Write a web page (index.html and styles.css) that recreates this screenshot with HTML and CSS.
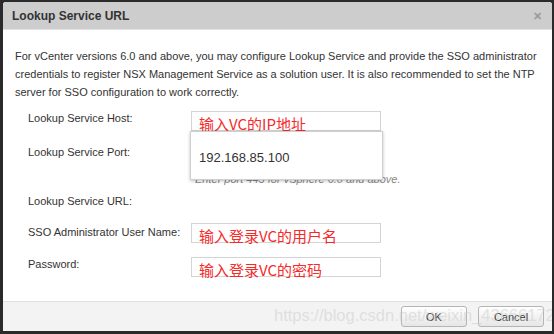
FILE: index.html
```html
<!DOCTYPE html>
<html lang="en">
<head>
    <meta charset="UTF-8">
    <title>Lookup Service URL</title>
    <link rel="stylesheet" href="styles.css">
</head>
<body>
    <div class="dialog">
        <div class="dialog-header">
            <span class="dialog-title">Lookup Service URL</span>
            <span class="close">&#x2715;</span>
        </div>
        <div class="dialog-body">
            <p class="intro">For vCenter versions 6.0 and above, you may configure Lookup Service and provide the SSO administrator credentials to register NSX Management Service as a solution user. It is also recommended to set the NTP server for SSO configuration to work correctly.</p>

            <div class="form">
                <div class="row row-host">
                    <label>Lookup Service Host:</label>
                    <div class="field"><div class="input cn">输入VC的IP地址</div></div>
                </div>
                <div class="row row-port">
                    <label>Lookup Service Port:</label>
                    <div class="field">
                        <div class="input"></div>
                        <div class="hint">Enter port 443 for vSphere 6.0 and above.</div>
                        <!-- autocomplete popup over the port field -->
                        <div class="popup">192.168.85.100</div>
                    </div>
                </div>
                <div class="row row-url">
                    <label>Lookup Service URL:</label>
                </div>
                <div class="row row-user">
                    <label>SSO Administrator User Name:</label>
                    <div class="field"><div class="input cn">输入登录VC的用户名</div></div>
                </div>
                <div class="row row-pass">
                    <label>Password:</label>
                    <div class="field"><div class="input cn">输入登录VC的密码</div></div>
                </div>
            </div>
        </div>
        <div class="dialog-footer">
            <button class="btn btn-ok">OK</button>
            <button class="btn btn-cancel">Cancel</button>
            <span class="watermark">https://blog.csdn.net/weixin_43666172</span>
        </div>
    </div>
</body>
</html>
```

FILE: styles.css
```css
body {
    margin: 0;
    background-color: #2a2a2a;
    font-family: "Liberation Sans", Arial, sans-serif;
    color: #333;
}
.dialog {
    margin: 2px 2px 0 3px;
    width: 549px;
    height: 329px;
    background: white;
    border-radius: 3px 3px 0 0;
    display: flex;
    flex-direction: column;
    overflow: hidden;
}
.dialog-header {
    height: 27px;
    background: #cdcdcd;
    border-bottom: 1px solid #e2e2e2;
    display: flex;
    align-items: center;
    justify-content: space-between;
    padding: 0 10px 0 9px;
}
.dialog-title {
    font-size: 12px;
    font-weight: bold;
    color: #333;
}
.close {
    color: #9a9a9a;
    font-size: 11px;
    font-weight: bold;
    margin-top: 2px;
}
.dialog-body {
    flex: 1;
    padding: 0 12px;
}
.intro {
    margin: 17px 0 0 0;
    font-size: 11px;
    line-height: 18px;
    color: #333;
}
.form {
    margin-top: 10px;
    padding-left: 13px;
}
.row {
    display: flex;
    font-size: 11px;
}
.row label {
    width: 163px;
    flex: none;
    color: #333;
    padding-top: 1px;
}
.field {
    position: relative;
    width: 190px;
}
.input {
    height: 18px;
    border: 1px solid #d4d4d4;
    background: white;
}
.cn {
    font-family: "Noto Sans CJK SC", sans-serif;
    font-size: 15px;
    line-height: 18px;
    color: #f52a2a;
    padding-left: 7px;
    padding-top: 3px;
    height: 15px;
    overflow: visible;
    white-space: nowrap;
}
.row-host {
    margin-top: 0;
}
.row-port {
    margin-top: 14px;
}
.hint {
    margin-top: 8px;
    margin-left: 4px;
    font-size: 11px;
    font-style: italic;
    color: #888;
    white-space: nowrap;
}
.popup {
    position: absolute;
    left: -1px;
    top: -14px;
    width: 193px;
    height: 49px;
    background: white;
    border: 1px solid #cfcfcf;
    box-shadow: 0 1px 3px rgba(0, 0, 0, 0.25);
    font-size: 13px;
    line-height: 51px;
    padding-left: 8px;
    box-sizing: border-box;
    color: #333;
}
.row-url {
    margin-top: 9px;
}
.row-user {
    margin-top: 16px;
}
.row-user label {
    padding-top: 3px;
}
.row-pass {
    margin-top: 14px;
}
.dialog-footer {
    position: relative;
    height: 29px;
    background: #f3f3f3;
    border-top: 1px solid #e0e0e0;
    display: flex;
    justify-content: flex-end;
    align-items: center;
    gap: 11px;
    padding-right: 8px;
}
.btn {
    width: 66px;
    height: 21px;
    font-family: "Liberation Sans", Arial, sans-serif;
    font-size: 11px;
    color: #333;
    background: linear-gradient(#ffffff, #e6e6e6);
    border: 1px solid #b5b5b5;
    border-radius: 3px;
    padding: 0;
}
.watermark {
    position: absolute;
    left: 271px;
    top: 4px;
    font-size: 16.5px;
    color: rgba(205, 205, 205, 0.55);
    white-space: nowrap;
    pointer-events: none;
}
```
